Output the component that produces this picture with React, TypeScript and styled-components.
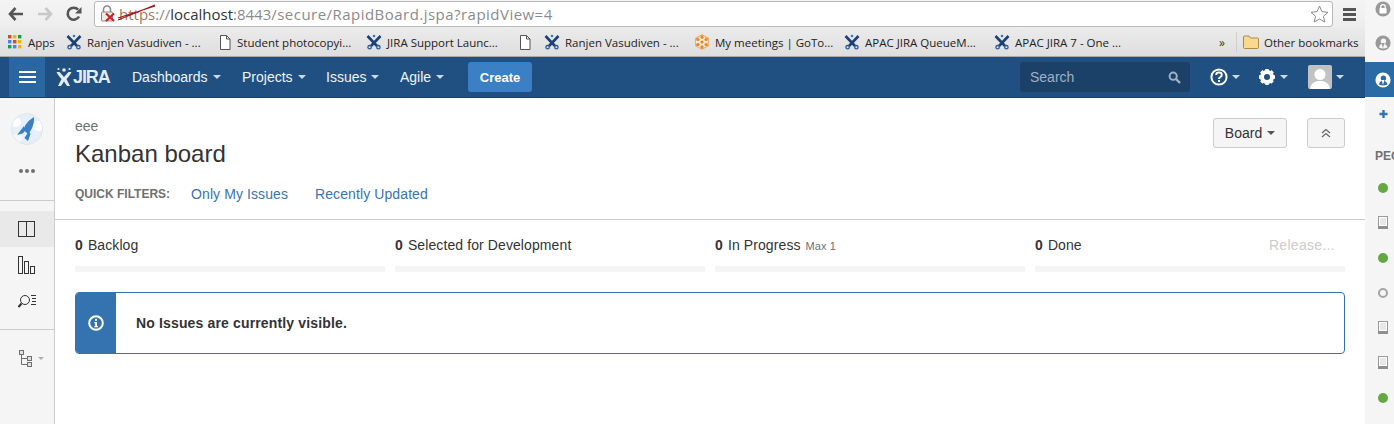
import React from "react";
import styled, { createGlobalStyle } from "styled-components";

const Global = createGlobalStyle`
  html, body { margin: 0; padding: 0; background: #fff; overflow: hidden; }
  body { font-family: "Liberation Sans", Arial, sans-serif; font-size: 14px; color: #333; }
`;

const Page = styled.div`display: flex; width: 1394px; height: 424px; overflow: hidden;`;
const Main = styled.div`width: 1365px; display: flex; flex-direction: column;`;

const Toolbar = styled.div`
  height: 28px; display: flex; align-items: center; position: relative;
  background: linear-gradient(#f4f4f4, #ededed); padding-left: 8px; box-sizing: border-box;
`;
const NavButton = styled.div<{ $w: number }>`width: ${p => p.$w}px; height: 28px; display: flex; align-items: center;`;
const Address = styled.div`
  width: 1239px; height: 26px; box-sizing: border-box; background: #fff;
  border: 1px solid #b9b9b9; border-radius: 3px; display: flex; align-items: center;
  padding-left: 5px; font: 15px "Open Sans", "Noto Sans", sans-serif; color: #8b8b8b; white-space: nowrap;
`;
const LockWrap = styled.span`width: 19px; height: 18px; display: inline-block; flex: none;`;
const Struck = styled.span`position: relative; color: #9a7a60;`;
const StrikeLine = styled.svg`position: absolute; left: -2px; top: -1px;`;
const Host = styled.span`color: #333;`;
const UrlPath = styled.span`letter-spacing: 0.47px;`;
const StarWrap = styled.div`margin-left: auto; margin-right: 3px; display: flex;`;
const Menu = styled.div`margin-left: 10px; display: flex; flex-direction: column; gap: 2px;`;
const MenuBar = styled.i`display: block; width: 13px; height: 3px; background: #555;`;

const Bookmarks = styled.div`
  height: 29px; display: flex; align-items: center; padding-left: 7px; box-sizing: border-box;
  background: linear-gradient(#ebebeb, #dedede); border-bottom: 1px solid #aaa;
  font: 11.5px "Open Sans", "Noto Sans", sans-serif; color: #222; white-space: nowrap;
`;
const Bookmark = styled.div<{ $w: number }>`width: ${p => p.$w}px; flex: none; display: flex; align-items: center; gap: 5px;`;
const BookmarkIcon = styled.span<{ $w?: number }>`width: ${p => p.$w ?? 16}px; height: 16px; flex: none; display: flex; align-items: center; justify-content: center;`;
const Chevrons = styled.div`margin-left: auto; width: 17px; font-size: 12px; color: #333;`;
const Separator = styled.div`width: 1px; height: 20px; background: #cfcfcf; margin-right: 6px;`;

const Header = styled.header`
  height: 41px; flex: none; background: #205081; border-bottom: 1px solid #1a4068; box-sizing: border-box;
  display: flex; align-items: center; padding-left: 9px; color: #fff;
`;
const Burger = styled.div`
  width: 36px; height: 40px; background: #2a67a1; display: flex; flex-direction: column;
  align-items: center; justify-content: center; gap: 3px;
`;
const BurgerBar = styled.i`display: block; width: 17px; height: 2px; background: #fff;`;
const Logo = styled.div`
  width: 76px; margin-left: 11px; display: flex; align-items: center; gap: 1px; font-weight: 700; font-size: 18px; letter-spacing: -1.1px; color: #e4ebf3;
`;
const NavItem = styled.div<{ $w: number }>`width: ${p => p.$w}px; flex: none; display: flex; align-items: center; gap: 5px; color: #f0f4f8; font-size: 14px;`;
const Caret = styled.i<{ $c?: string; $s?: number }>`
  display: inline-block; width: 0; height: 0; border-style: solid;
  border-width: ${p => p.$s ?? 4}px ${p => p.$s ?? 4}px 0 ${p => p.$s ?? 4}px;
  border-color: ${p => p.$c ?? "#ccd9e6"} transparent transparent transparent;
`;
const Create = styled.div`
  width: 64px; height: 30px; background: #3b7fc4; border-radius: 3px; color: #fff; font-weight: 700;
  font-size: 13px; display: flex; align-items: center; justify-content: center;
`;
const Search = styled.div`
  margin-left: auto; width: 170px; height: 30px; background: #1c4168; border-radius: 3px; display: flex; align-items: center;
  justify-content: space-between; padding: 0 9px 0 10px; box-sizing: border-box; color: #9eb1c5; font-size: 14px;
`;
const HeaderIcon = styled.div<{ $ml: number }>`margin-left: ${p => p.$ml}px; display: flex; align-items: center; gap: 4px;`;
const Avatar = styled.div`width: 24px; height: 24px; border-radius: 2px; background: #c2c2c2; overflow: hidden;`;
const HeaderEnd = styled.div`width: 21px;`;

const Body = styled.div`flex: 1; display: flex; min-height: 0;`;
const Side = styled.aside`width: 55px; flex: none; box-sizing: border-box; background: #f5f5f5; border-right: 1px solid #ccc; display: flex; flex-direction: column;`;
const SideTop = styled.div`height: 103px; box-sizing: border-box; border-bottom: 1px solid #ccc; display: flex; flex-direction: column; align-items: center; padding-top: 15px;`;
const RocketCircle = styled.div`width: 32px; height: 32px; border-radius: 50%; background: #e4eff9; border: 1px solid #e0e6ec; box-sizing: border-box; margin-left: -1px; overflow: hidden;`;
const Dots = styled.div`display: flex; gap: 2px; margin-top: 24px;`;
const Dot = styled.i`display: block; width: 4px; height: 4px; border-radius: 50%; background: #707070;`;
const SideNav = styled.div`height: 129px; box-sizing: border-box; padding-top: 10px; border-bottom: 1px solid #ccc; display: flex; flex-direction: column;`;
const SideItem = styled.div<{ $on?: boolean }>`height: 36px; display: flex; align-items: center; justify-content: center; background: ${p => (p.$on ? "#e9e9e9" : "transparent")};`;
const SideTree = styled.div`display: flex; align-items: center; justify-content: center; gap: 5px; padding-top: 20px; padding-left: 8px;`;

const Content = styled.main`flex: 1; min-width: 0;`;
const Head = styled.div`height: 122px; box-sizing: border-box; border-bottom: 1px solid #ccc; padding: 21px 20px 0; display: flex; justify-content: space-between;`;
const Titles = styled.div`display: flex; flex-direction: column;`;
const Project = styled.div`font-size: 14px; line-height: 14px; color: #707070;`;
const Title = styled.h1`margin: 7px 0 0; font-size: 24px; font-weight: 400; line-height: 28px; color: #333;`;
const Filters = styled.div`display: flex; align-items: center; margin-top: 16px; height: 20px;`;
const FilterLabel = styled.span`font-size: 12px; font-weight: 700; color: #707070; width: 116px;`;
const FilterLink = styled.a<{ $w: number }>`font-size: 14px; letter-spacing: 0.1px; color: #3b73af; width: ${p => p.$w}px;`;
const Actions = styled.div`display: flex; gap: 20px; align-items: flex-start; margin-top: -1px;`;
const Btn = styled.div<{ $w: number }>`
  width: ${p => p.$w}px; height: 30px; box-sizing: border-box; background: #f5f5f5; border: 1px solid #ccc; border-radius: 3px;
  display: flex; align-items: center; justify-content: center; gap: 5px; color: #333; font-size: 14px;
`;

const Board = styled.div`padding: 0 20px;`;
const Columns = styled.div`display: grid; grid-template-columns: repeat(4, 310px); gap: 10px; padding-top: 15px;`;
const Column = styled.div`display: flex; flex-direction: column; position: relative;`;
const ColHead = styled.div`height: 20px; line-height: 20px; font-size: 14px; letter-spacing: 0.1px; color: #333; white-space: nowrap;`;
const Count = styled.b`margin-right: 5px;`;
const Max = styled.span`font-size: 11px; color: #707070; margin-left: 5px;`;
const Bar = styled.div`height: 6px; margin-top: 11px; background: #f5f5f5;`;
const Release = styled.span`position: absolute; right: 10px; top: 0; line-height: 20px; color: #ccc; font-size: 14px; letter-spacing: 0.3px;`;
const Message = styled.div`
  margin-top: 20px; height: 62px; box-sizing: border-box; border: 1px solid #3572b0; border-radius: 4px; display: flex; align-items: center; overflow: hidden;
`;
const MessageIcon = styled.div`width: 40px; height: 100%; background: #3572b0; display: flex; align-items: center; justify-content: center;`;
const MessageText = styled.div`margin-left: 20px; font-weight: 700; font-size: 14px; color: #333; letter-spacing: 0.15px;`;

const Strip = styled.aside`width: 29px; flex: none; background: #f5f5f5; display: flex; flex-direction: column; overflow: hidden;`;
const StripRow = styled.div<{ $h: number; $mt?: number; $on?: boolean }>`
  width: 36px; height: ${p => p.$h}px; margin-top: ${p => p.$mt ?? 0}px; flex: none; display: flex; align-items: center; justify-content: center;
  background: ${p => (p.$on ? "#2a6ba6" : "transparent")};
`;
const StripTitle = styled.div`height: 28px; line-height: 28px; margin-top: 11px; padding-left: 10px; font-size: 12px; font-weight: 700; color: #707070; white-space: nowrap;`;
const Presence = styled.i<{ $ring?: boolean }>`
  display: block; width: 10px; height: 10px; border-radius: 50%; box-sizing: border-box;
  ${p => (p.$ring ? "border: 2px solid #a5a5a5; background: transparent;" : "background: #64a843;")}
`;

const JiraX = () => (
  <svg width="16" height="16" viewBox="0 0 16 16" fill="none">
    <path d="M1.5 2 L11 12 M14.5 2 L5 12" stroke="#1c3f74" strokeWidth="2.6" />
    <circle cx="3.6" cy="13.2" r="1.7" stroke="#2a5a94" strokeWidth="1.3" />
    <circle cx="12.4" cy="13.2" r="1.7" stroke="#2a5a94" strokeWidth="1.3" />
    <circle cx="8" cy="2" r="1.3" fill="#3a78b8" />
  </svg>
);
const Doc = () => (
  <svg width="12" height="15" viewBox="0 0 12 15" fill="#fff" stroke="#555">
    <path d="M1.5 .5 H7.5 L11 4 V14.5 H1.5Z" /><path d="M7.5 .5 V4 H11" fill="none" />
  </svg>
);
const GoTo = () => {
  const spots: Array<[number, number]> = [[8, 3.2], [12, 5.6], [12, 10.4], [8, 12.8], [4, 10.4], [4, 5.6], [8, 8]];
  return (
    <svg width="16" height="16" viewBox="0 0 16 16">
      <path d="M8 .3 L14.8 4 V12 L8 15.7 L1.2 12 V4Z" fill="#f0a050" />
      <circle cx="8" cy="8" r="6" fill="#fde9cf" />
      {spots.map(([x, y], i) => <circle key={i} cx={x} cy={y} r="1.5" fill="#e8802c" />)}
    </svg>
  );
};
const Person = ({ fg, bg }: { fg: string; bg: string }) => (
  <svg width="16" height="16" viewBox="0 0 18 18">
    <circle cx="9" cy="9" r="8.5" fill={bg} />
    <circle cx="9.5" cy="7" r="3" fill={fg} />
    <path d="M4.5 14 C5 10.5 7 10 9.5 10 C12 10 13.5 11 14 14 C11 15.5 7 15.5 4.5 14Z" fill={fg} />
    <path d="M7.5 9 L9 15 L10.5 9Z" fill={bg} />
  </svg>
);
const Phone = () => (
  <svg width="10" height="13" viewBox="0 0 10 13">
    <rect x="0.5" y="0.5" width="9" height="12" fill="#fff" stroke="#999" />
    <rect x="2" y="2" width="6" height="7" fill="#e8e8e8" />
    <rect x="0" y="10" width="10" height="3" fill="#8f8f8f" />
  </svg>
);

export default function App() {
  const appsColors = ["#dc4437", "#f4b400", "#0f9d58", "#4285f4", "#dc4437", "#f4b400", "#0f9d58", "#4285f4", "#f4b400"];
  return (
    <Page>
      <Global />
      <Main>
        <Toolbar>
          <NavButton $w={29}>
            <svg width="16" height="14" viewBox="0 0 16 14"><path d="M7.5 1 L2 7 L7.5 13 M2.5 7 H15" fill="none" stroke="#555" strokeWidth="2.6" /></svg>
          </NavButton>
          <NavButton $w={29}>
            <svg width="16" height="14" viewBox="0 0 16 14"><path d="M8.5 1 L14 7 L8.5 13 M13.5 7 H1" fill="none" stroke="#c8c8c8" strokeWidth="2.6" /></svg>
          </NavButton>
          <NavButton $w={28}>
            <svg width="16" height="16" viewBox="0 0 16 16"><path d="M13 10.5 A6 6 0 1 1 12.2 3.7" fill="none" stroke="#555" strokeWidth="2.6" /><path d="M15.5 1 V7.5 H9Z" fill="#555" /></svg>
          </NavButton>
          <Address>
            <LockWrap>
              <svg width="18" height="18" viewBox="0 0 18 18">
                <rect x="1.5" y="7" width="11" height="9" rx="1" fill="#f0ece4" stroke="#888" />
                <path d="M3.5 7 V4.5 A3.5 3.5 0 0 1 10.5 4.5 V7" fill="none" stroke="#888" strokeWidth="1.6" />
                <path d="M6 8.5 L14 16 M14 8.5 L6 16" stroke="#d02020" strokeWidth="2.2" />
              </svg>
            </LockWrap>
            <Struck>
              https
              <StrikeLine width="40" height="20" viewBox="0 0 40 20"><path d="M1 17 L38 2 M1 15 L38 3" stroke="#a01818" strokeWidth="1.2" fill="none" /></StrikeLine>
            </Struck>
            ://<Host>localhost</Host>:8443<UrlPath>/secure/RapidBoard.jspa?rapidView=4</UrlPath>
            <StarWrap>
              <svg width="19" height="18" viewBox="0 0 19 18"><path d="M9.5 1 L12 6.7 L18 7.3 L13.4 11.3 L14.8 17 L9.5 14 L4.2 17 L5.6 11.3 L1 7.3 L7 6.7Z" fill="#fff" stroke="#8a8a8a" /></svg>
            </StarWrap>
          </Address>
          <Menu><MenuBar /><MenuBar /><MenuBar /></Menu>
        </Toolbar>
        <Bookmarks>
          <Bookmark $w={59}>
            <BookmarkIcon>
              <svg width="14" height="14" viewBox="0 0 14 14">
                {appsColors.map((c, i) => <rect key={i} x={(i % 3) * 5} y={Math.floor(i / 3) * 5} width="3.4" height="3.4" fill={c} />)}
              </svg>
            </BookmarkIcon>
            Apps
          </Bookmark>
          <Bookmark $w={152}><BookmarkIcon><JiraX /></BookmarkIcon>Ranjen Vasudiven - ...</Bookmark>
          <Bookmark $w={148}><BookmarkIcon $w={14}><Doc /></BookmarkIcon>Student photocopyi...</Bookmark>
          <Bookmark $w={152}><BookmarkIcon><JiraX /></BookmarkIcon>JIRA Support Launc...</Bookmark>
          <Bookmark $w={26}><BookmarkIcon $w={14}><Doc /></BookmarkIcon></Bookmark>
          <Bookmark $w={150}><BookmarkIcon><JiraX /></BookmarkIcon>Ranjen Vasudiven - ...</Bookmark>
          <Bookmark $w={150}><BookmarkIcon><GoTo /></BookmarkIcon>My meetings | GoTo...</Bookmark>
          <Bookmark $w={150}><BookmarkIcon><JiraX /></BookmarkIcon>APAC JIRA QueueM...</Bookmark>
          <Bookmark $w={150}><BookmarkIcon><JiraX /></BookmarkIcon>APAC JIRA 7 - One ...</Bookmark>
          <Chevrons>»</Chevrons>
          <Separator />
          <Bookmark $w={122}>
            <BookmarkIcon>
              <svg width="16" height="14" viewBox="0 0 16 14"><path d="M.5 2 Q.5 1 1.5 1 H6 L7.5 3 H14.5 Q15.5 3 15.5 4 V12.5 Q15.5 13.5 14.5 13.5 H1.5 Q.5 13.5 .5 12.5Z" fill="#f8d98e" stroke="#a88a4c" /></svg>
            </BookmarkIcon>
            Other bookmarks
          </Bookmark>
        </Bookmarks>
        <Header>
          <Burger><BurgerBar /><BurgerBar /><BurgerBar /></Burger>
          <Logo>
            <svg width="16" height="20" viewBox="0 0 16 20">
              <circle cx="8" cy="3" r="1.8" fill="#e4ebf3" />
              <circle cx="2.5" cy="2" r="1.1" fill="#e4ebf3" />
              <circle cx="13.5" cy="2" r="1.1" fill="#e4ebf3" />
              <path d="M.5 5 L3.5 5 L8 10 L12.5 5 L15.5 5 C14 8 12 10.5 10.5 12 L14 19 L11 19 L8 14.5 L5 19 L2 19 L5.5 12 C4 10.5 2 8 .5 5Z" fill="#e4ebf3" />
            </svg>
            JIRA
          </Logo>
          <NavItem $w={110}>Dashboards <Caret /></NavItem>
          <NavItem $w={84}>Projects <Caret /></NavItem>
          <NavItem $w={74}>Issues <Caret /></NavItem>
          <NavItem $w={68}>Agile <Caret /></NavItem>
          <Create>Create</Create>
          <Search>
            Search
            <svg width="13" height="13" viewBox="0 0 13 13"><circle cx="5.2" cy="5.2" r="3.6" fill="none" stroke="#9eb1c5" strokeWidth="2" /><path d="M8 8 L12 12" stroke="#9eb1c5" strokeWidth="2.4" /></svg>
          </Search>
          <HeaderIcon $ml={20}>
            <svg width="18" height="18" viewBox="0 0 18 18">
              <circle cx="9" cy="9" r="7.6" fill="none" stroke="#fff" strokeWidth="2" />
              <path d="M6.2 7 C6.2 3.8 11.8 3.8 11.8 7 C11.8 9 9 9 9 11" fill="none" stroke="#fff" strokeWidth="2" />
              <rect x="8" y="12" width="2" height="2" fill="#fff" />
            </svg>
            <Caret />
          </HeaderIcon>
          <HeaderIcon $ml={18}>
            <svg width="18" height="18" viewBox="0 0 18 18">
              <circle cx="9" cy="9" r="5" fill="none" stroke="#fff" strokeWidth="4" />
              <path d="M9 1 V17 M1 9 H17 M3.3 3.3 L14.7 14.7 M14.7 3.3 L3.3 14.7" stroke="#fff" strokeWidth="3.4" strokeDasharray="3.4 9.2 3.4" />
            </svg>
            <Caret />
          </HeaderIcon>
          <HeaderIcon $ml={20}>
            <Avatar>
              <svg width="24" height="24" viewBox="0 0 24 24"><circle cx="12" cy="9.5" r="5.5" fill="#fff" /><path d="M2 24 C3 17 8 16 12 16 C16 16 21 17 22 24Z" fill="#fff" /></svg>
            </Avatar>
            <Caret />
          </HeaderIcon>
          <HeaderEnd />
        </Header>
        <Body>
          <Side>
            <SideTop>
              <RocketCircle>
                <svg width="30" height="30" viewBox="0 0 30 30">
                  <ellipse cx="27" cy="12" rx="6" ry="5" fill="#fff" />
                  <ellipse cx="3" cy="8" rx="6" ry="5" fill="#fff" />
                  <ellipse cx="5" cy="24" rx="6" ry="4" fill="#f4f8fc" />
                  <path d="M22 3 C17 6 13 10 11.5 16 L16 20 C20 16 22.5 9 22 3Z" fill="#3b7fc4" />
                  <path d="M12 12 L5 21 L10.5 19.5 L13 17Z M17 17 L12.5 24 L16 27 L18.5 20Z" fill="#3b7fc4" />
                </svg>
              </RocketCircle>
              <Dots><Dot /><Dot /><Dot /></Dots>
            </SideTop>
            <SideNav>
              <SideItem $on>
                <svg width="18" height="16" viewBox="0 0 18 16" fill="none" stroke="#333"><rect x=".5" y=".5" width="16" height="15" /><path d="M8.5 .5 V15.5" /></svg>
              </SideItem>
              <SideItem>
                <svg width="18" height="18" viewBox="0 0 18 18" fill="none" stroke="#333"><rect x=".5" y=".5" width="4" height="17" /><rect x="6.5" y="5.5" width="4" height="12" /><rect x="12.5" y="10.5" width="4" height="7" /></svg>
              </SideItem>
              <SideItem>
                <svg width="19" height="14" viewBox="0 0 19 14" fill="none" stroke="#333"><circle cx="7" cy="6" r="4.5" /><path d="M3.5 9.5 L.5 13" strokeWidth="2" /><path d="M13 1.5 H18 M14 4.5 H18 M14 7.5 H18 M13 10.5 H18" /></svg>
              </SideItem>
            </SideNav>
            <SideTree>
              <svg width="14" height="17" viewBox="0 0 14 17" fill="#e0e0e0" stroke="#707070"><rect x=".5" y=".5" width="4" height="4" /><rect x="8.5" y="6.5" width="4" height="4" /><rect x="8.5" y="12.5" width="4" height="4" /><path d="M2.5 4.5 V14.5 H8.5 M2.5 8.5 H8.5" fill="none" /></svg>
              <Caret $c="#b0b0b0" $s={3} />
            </SideTree>
          </Side>
          <Content>
            <Head>
              <Titles>
                <Project>eee</Project>
                <Title>Kanban board</Title>
                <Filters>
                  <FilterLabel>QUICK FILTERS:</FilterLabel>
                  <FilterLink $w={124}>Only My Issues</FilterLink>
                  <FilterLink $w={120}>Recently Updated</FilterLink>
                </Filters>
              </Titles>
              <Actions>
                <Btn $w={74}>Board <Caret $c="#555" /></Btn>
                <Btn $w={38}>
                  <svg width="10" height="10" viewBox="0 0 10 10" fill="none" stroke="#666" strokeWidth="1.2"><path d="M1 5 L5 1.5 L9 5 M1 9 L5 5.5 L9 9" /></svg>
                </Btn>
              </Actions>
            </Head>
            <Board>
              <Columns>
                <Column><ColHead><Count>0</Count>Backlog</ColHead><Bar /></Column>
                <Column><ColHead><Count>0</Count>Selected for Development</ColHead><Bar /></Column>
                <Column><ColHead><Count>0</Count>In Progress<Max>Max 1</Max></ColHead><Bar /></Column>
                <Column><ColHead><Count>0</Count>Done</ColHead><Release>Release...</Release><Bar /></Column>
              </Columns>
              <Message>
                <MessageIcon>
                  <svg width="16" height="16" viewBox="0 0 16 16">
                    <circle cx="8" cy="8" r="6.8" fill="none" stroke="#fff" strokeWidth="2" />
                    <rect x="7" y="3.8" width="2" height="2" fill="#fff" />
                    <path d="M6.3 7 H9 V11 H10 V12.2 H6.3 V11 H7.2 V8.2 H6.3Z" fill="#fff" />
                  </svg>
                </MessageIcon>
                <MessageText>No Issues are currently visible.</MessageText>
              </Message>
            </Board>
          </Content>
        </Body>
      </Main>
      <Strip>
        <StripRow $h={18}>
          <svg width="16" height="16" viewBox="0 0 18 18"><circle cx="9" cy="9" r="8.5" fill="#999" /><rect x="5" y="8" width="8" height="6" rx="1" fill="#fff" /><path d="M6.5 8 V6.5 A2.5 2.5 0 0 1 11.5 6.5 V8" fill="none" stroke="#fff" strokeWidth="1.4" /></svg>
        </StripRow>
        <StripRow $h={30} $mt={10}><Person fg="#f5f5f5" bg="#999" /></StripRow>
        <StripRow $h={35} $mt={4} $on><Person fg="#2a6ba6" bg="#fff" /></StripRow>
        <StripRow $h={34}>
          <svg width="9" height="10" viewBox="0 0 9 10"><path d="M4.5 1 V9 M.5 5 H8.5" stroke="#3572b0" strokeWidth="2.4" /></svg>
        </StripRow>
        <StripTitle>PEOPLE</StripTitle>
        <StripRow $h={35}><Presence /></StripRow>
        <StripRow $h={35}><Phone /></StripRow>
        <StripRow $h={35}><Presence /></StripRow>
        <StripRow $h={35}><Presence $ring /></StripRow>
        <StripRow $h={35}><Phone /></StripRow>
        <StripRow $h={35}><Phone /></StripRow>
        <StripRow $h={35}><Presence /></StripRow>
      </Strip>
    </Page>
  );
}
